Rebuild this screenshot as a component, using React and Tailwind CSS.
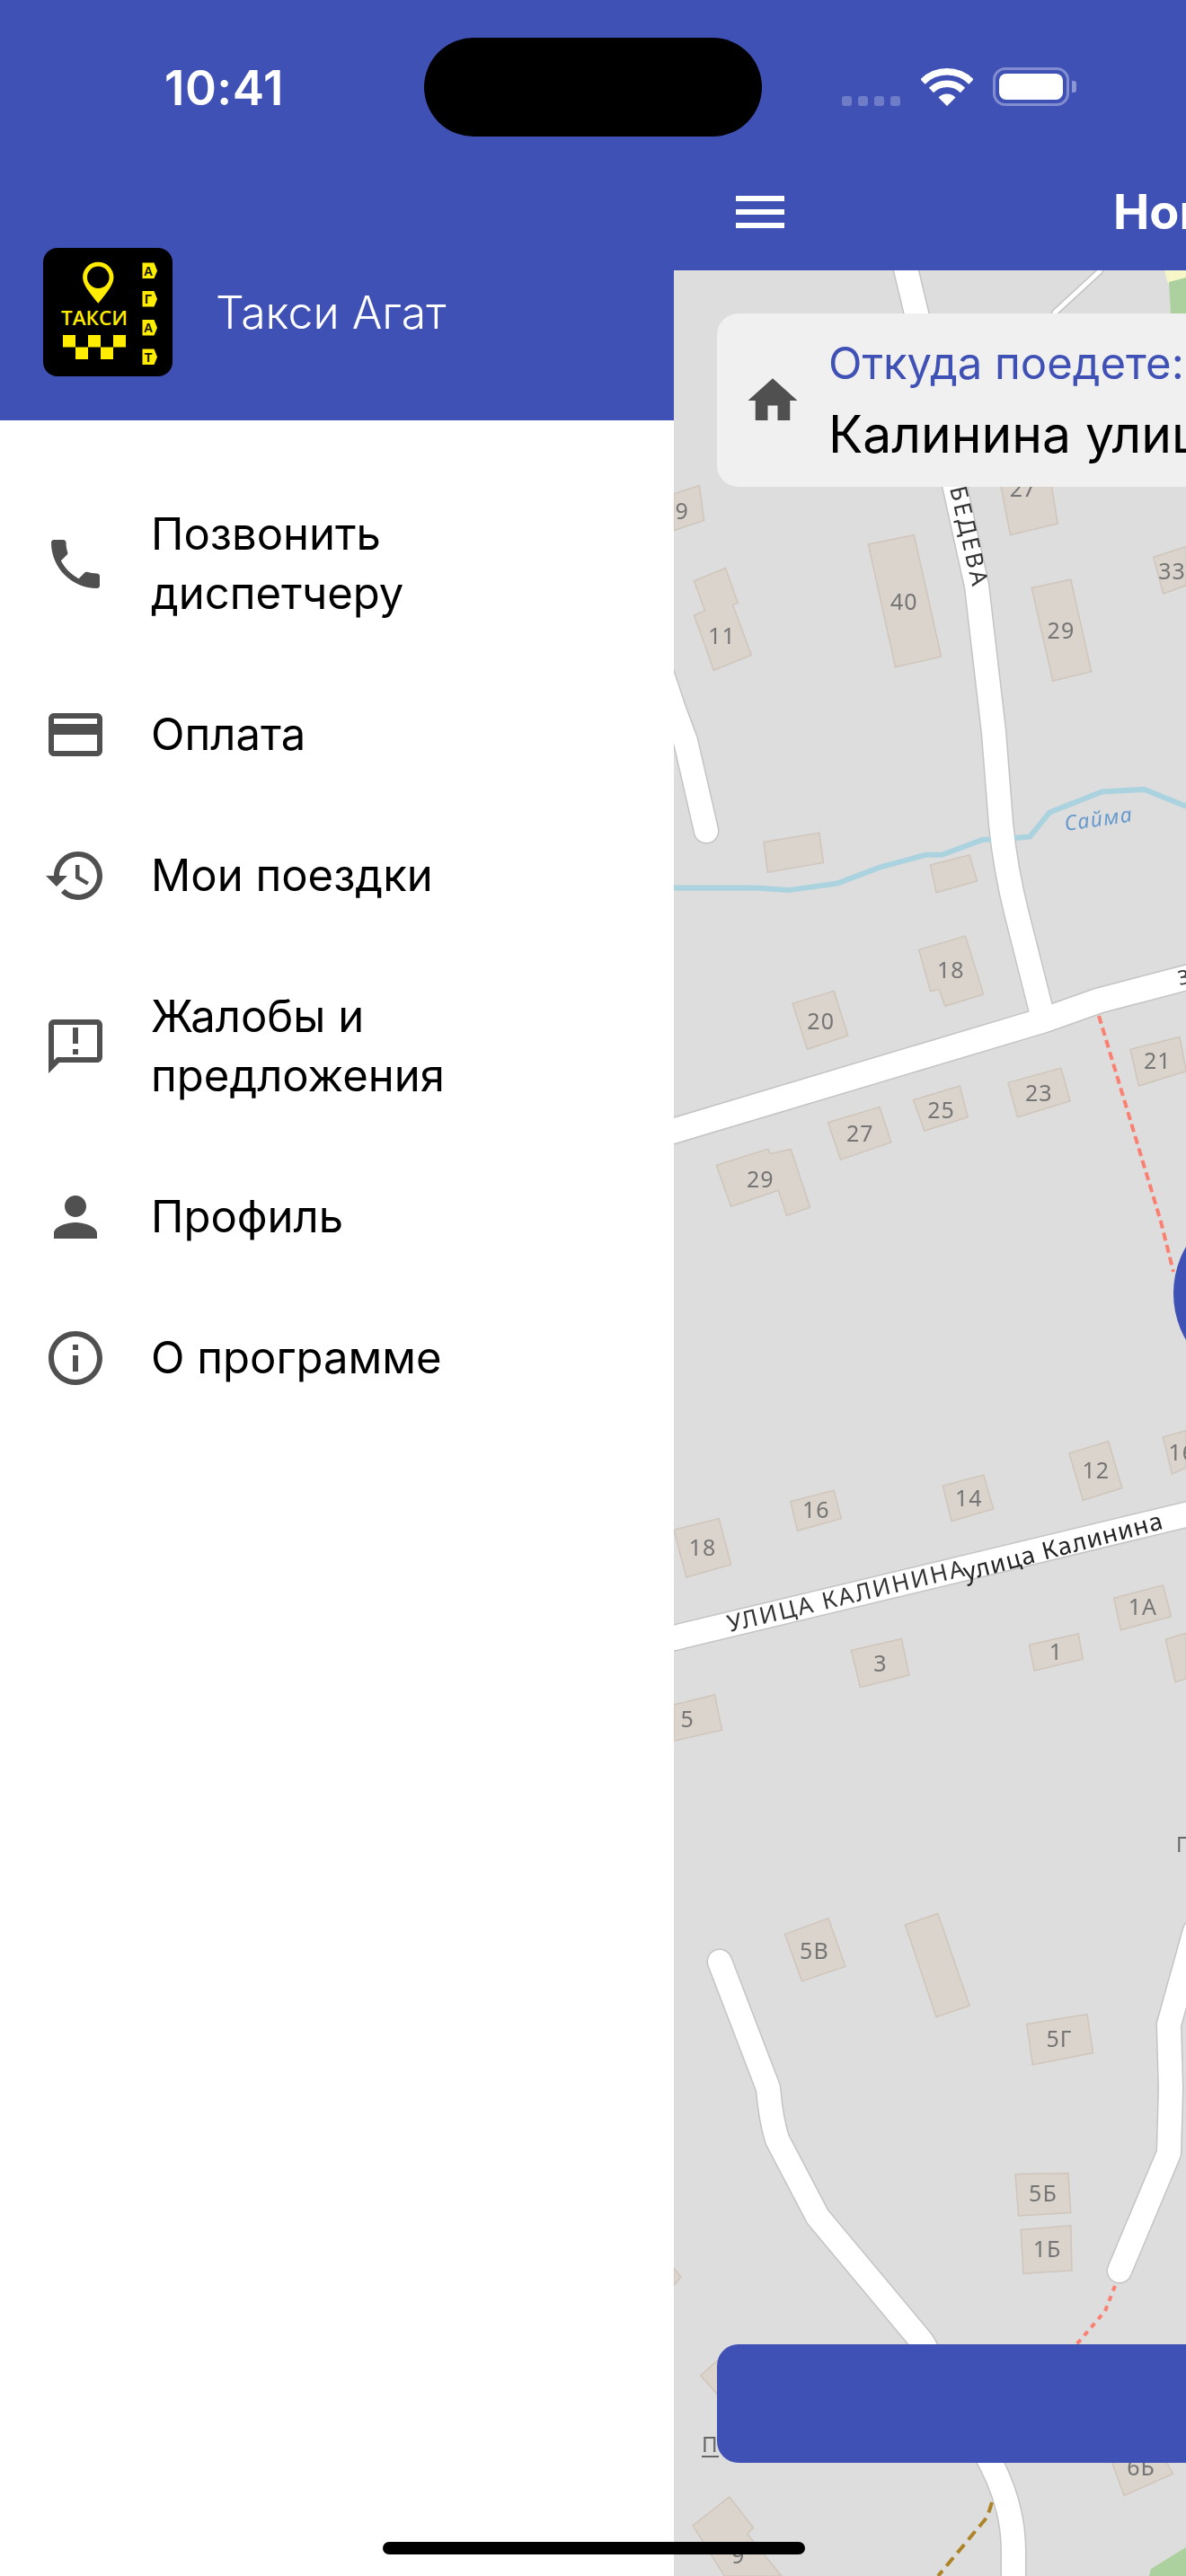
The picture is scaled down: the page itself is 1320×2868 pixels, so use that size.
import React from "react";

const BRAND = "#3f51b5";

// map pieces were read off three crops of the screen, each with its own scale
const crops = {
  a: (x, y) => [750 + x / 2.75, 560 + y / 1.96],
  b: (x, y) => [750 + x / 2.75, 1360 + y / 2.063],
  c: (x, y) => [750 + x / 2.75, 2120 + y / 2.096],
};

const toPoints = (crop, list) => {
  const nums = list.split(/[\s,]+/).map(Number);
  const out = [];
  for (let i = 0; i < nums.length; i += 2) {
    out.push(crops[crop](nums[i], nums[i + 1]).map((n) => n.toFixed(1)).join(","));
  }
  return out.join(" ");
};

const buildings = [
  ["a", "0,-20 78,-38 92,38 0,60", "9", 25, 18],
  ["a", "1000,-40 1155,-40 1175,45 1030,70"],
  ["a", "1468,118 1568,95 1568,180 1498,198", "33", 1525, 148],
  ["a", "595,90 735,70 818,335 678,358", "40", 705, 215],
  ["a", "62,170 158,142 196,218 180,222 237,332 122,365 62,245 95,235", "11", 147, 290],
  ["a", "1095,185 1215,167 1278,368 1160,388", "29", 1185, 278],
  ["a", "275,740 445,720 458,785 287,806"],
  ["a", "785,790 905,768 928,825 803,850"],
  ["a", "750,975 892,945 948,1072 830,1098 812,1062 785,1065", "18", 848, 1020],
  ["a", "363,1092 490,1065 533,1162 408,1192", "20", 450, 1130],
  ["a", "1397,1192 1548,1165 1568,1240 1423,1272", "21", 1480, 1218],
  ["a", "1023,1265 1185,1233 1213,1305 1052,1340", "23", 1117, 1287],
  ["a", "733,1303 875,1272 900,1340 767,1370", "25", 818, 1325],
  ["a", "472,1352 630,1318 665,1395 510,1433", "27", 570, 1375],
  ["a", "130,1445 288,1410 295,1420 358,1410 417,1537 345,1555 320,1500 175,1535", "29", 265, 1475],
  ["b", "0,708 138,682 175,788 38,817", "18", 88, 748],
  ["b", "357,643 490,617 512,682 378,710", "16", 435, 663],
  ["b", "823,607 948,582 978,660 850,688", "14", 903, 635],
  ["b", "1210,532 1330,505 1372,612 1252,640", "12", 1292, 572],
  ["b", "1497,495 1568,480 1568,565 1525,580", "16", 1556, 530],
  ["b", "1347,865 1497,835 1522,907 1368,938", "1А", 1435, 885],
  ["b", "543,985 697,958 720,1042 570,1070", "3", 632, 1015],
  ["b", "1088,972 1238,947 1252,1005 1103,1032", "1", 1170, 988],
  ["b", "1505,960 1568,945 1568,1050 1535,1058"],
  ["b", "0,1110 125,1087 147,1168 0,1193", "5", 42, 1143],
  ["c", "340,70 473,33 525,145 392,180", "5В", 430, 108],
  ["c", "708,48 808,22 905,237 803,263"],
  ["c", "1080,280 1265,257 1283,347 1098,375", "5Г", 1180, 315],
  ["c", "1045,630 1207,628 1215,720 1055,727", "5Б", 1130, 675],
  ["c", "1062,760 1215,750 1218,855 1070,862", "1Б", 1143, 805],
  ["c", "0,850 22,870 0,890"],
  ["c", "82,1100 140,1060 200,1100 140,1150"],
  ["c", "1335,1290 1500,1290 1527,1330 1378,1380", "6Б", 1430, 1315],
  ["c", "58,1450 170,1383 243,1455 225,1470 330,1568 155,1568", "9", 197, 1520],
];

const roads = [
  ["M1007 295 L1020 349 L1087 652 L1106 815 L1114 917 Q1119 968 1132 1019 L1159 1126", 26],
  ["M740 1262 L1161 1136 L1223 1114 L1330 1086", 27],
  ["M735 745 L750 790 L763 825 L786 925", 26],
  ["M740 1826 L1330 1684", 27],
  ["M801 2184 L855 2325 Q858 2360 865 2382 L910 2468 L1026 2607 L1090 2720 Q1128 2780 1128 2840 L1128 2880", 26],
  ["M1246 2528 L1301 2397 L1303 2325 L1301 2254 L1330 2150", 26],
  ["M1224 302 L1174 348", 5],
];

function StreamAndPaths() {
  return (
    <>
      <polyline
        points={toPoints("a", "0,840 250,840 350,845 500,830 630,795 770,768 820,768 945,735 1060,730 1090,728 1150,675 1310,630 1440,625 1568,662")}
        fill="none"
        stroke="#aad3df"
        strokeWidth="6"
      />
      <path d="M1223 1131 L1292 1360 L1306 1416" fill="none" stroke="#fa8072" strokeWidth="4" strokeDasharray="9 5" />
      <path d="M1241 2545 L1230 2573 L1201 2607 L1170 2630" fill="none" stroke="#fa8072" strokeWidth="4" strokeDasharray="6 6" />
      <path d="M1104 2786 L1099 2802 L1044 2868" fill="none" stroke="#ac8327" strokeWidth="4" strokeDasharray="12 7" />
    </>
  );
}

function MapLayer() {
  return (
    <svg viewBox="750 301 570 2567" className="h-full w-full blur-[0.6px] font-['Noto_Sans',sans-serif]">
      <path d="M1296 301 L1320 301 L1320 309 L1300 316 Z" fill="#f6f6c8" />
      <path d="M1301 314 L1320 309 L1320 349 L1303 349 Z" fill="#add19e" />
      <path d="M1279 2868 L1281 2860 L1320 2836 L1320 2868 Z" fill="#add19e" />

      {roads.map(([d, w]) => (
        <path key={d} d={d} fill="none" stroke="#c4c4c4" strokeWidth={w + 3} strokeLinecap="round" strokeLinejoin="round" />
      ))}
      <StreamAndPaths />
      {roads.map(([d, w]) => (
        <path key={d} d={d} fill="none" stroke="#ffffff" strokeWidth={w} strokeLinecap="round" strokeLinejoin="round" />
      ))}

      {buildings.map(([crop, list]) => (
        <polygon key={list} points={toPoints(crop, list)} fill="#dbd4cd" stroke="#cfc5bb" strokeWidth="1.500" />
      ))}
      {buildings
        .filter((b) => b[2])
        .map(([crop, list, label, x, y]) => {
          const [tx, ty] = crops[crop](x, y);
          return (
            <text key={list} x={tx} y={ty + 9} textAnchor="middle" fontSize="25" letterSpacing="1" fill="#757575">
              {label}
            </text>
          );
        })}
      <text x="1138" y="553" textAnchor="middle" fontSize="25" fill="#757575">27</text>

      <text transform="translate(1083 656) rotate(77)" textAnchor="end" fontSize="26" letterSpacing="3" fill="#333">ЛЕБЕДЕВА</text>
      <text transform="translate(812 1817) rotate(-13.4)" fontSize="26" textLength="270" fill="#333">УЛИЦА КАЛИНИНА</text>
      <text transform="translate(1075 1760) rotate(-14.8)" fontSize="27" textLength="228" fill="#222">улица Калинина</text>
      <text transform="translate(1186 925) rotate(-8)" fontSize="23" fontStyle="italic" letterSpacing="1.500" fill="#6699cc">Сайма</text>
      <text transform="translate(1313 1097) rotate(-13)" fontSize="22" fill="#333">З</text>
      <text x="1309" y="2062" fontSize="23" fill="#666">П</text>
      <text x="781" y="2730" fontSize="24" fill="#666">П</text>
      <line x1="781" y1="2735" x2="800" y2="2735" stroke="#666" strokeWidth="2" />
      <circle cx="1410" cy="1440" r="104" fill={BRAND} />
    </svg>
  );
}

function TaxiLogo() {
  const tags = [
    [16.5, "А"],
    [48, "Г"],
    [80, "А"],
    [112.5, "Т"],
  ];
  return (
    <svg viewBox="0 0 144 143" className="h-[143px] w-[144px] shrink-0 rounded-[16px] bg-black">
      <path
        fillRule="evenodd"
        fill="#ffec00"
        d="M61.3 15.7c-9.500 0-17.200 7.500-17.200 17 0 9 9.700 19.500 17.200 29 7.500-9.500 17.200-20 17.200-29 0-9.500-7.700-17-17.200-17zm0 4.800c6.800 0 12.300 5.500 12.300 12.300S68.100 45 61.300 45 49 39.500 49 32.800s5.500-12.300 12.300-12.300z"
      />
      <text x="20" y="85.500" fontSize="22" fontWeight="600" textLength="74" lengthAdjust="spacingAndGlyphs" fill="#ffec00" fontFamily="'Open Sans', sans-serif">
        ТАКСИ
      </text>
      {[22, 50, 78].map((x) => (
        <rect key={x} x={x} y="97" width="14" height="13.500" fill="#ffec00" />
      ))}
      {[36, 64].map((x) => (
        <rect key={x} x={x} y="110.500" width="14" height="13.500" fill="#ffec00" />
      ))}
      {tags.map(([y, letter]) => (
        <g key={y}>
          <polygon points={`110.500,${y} 123.500,${y} 127,${y + 9} 123.500,${y + 17.500} 110.500,${y + 17.500}`} fill="#ffec00" />
          <text x="117" y={y + 14} fontSize="14" fontWeight="700" textAnchor="middle" fill="#111" fontFamily="'Liberation Sans', sans-serif">
            {letter}
          </text>
        </g>
      ))}
    </svg>
  );
}

function Icon({ d, className = "h-[72px] w-[72px] -my-[4px]" }) {
  return (
    <svg viewBox="0 0 24 24" className={`${className} shrink-0`} fill="#505050">
      <path d={d} />
    </svg>
  );
}

const menuItems = [
  {
    label: ["Позвонить", "диспетчеру"],
    icon: "M6.62 10.79c1.44 2.83 3.76 5.14 6.59 6.59l2.2-2.2c.27-.27.67-.36 1.02-.24 1.12.37 2.33.57 3.57.57.55 0 1 .45 1 1V20c0 .55-.45 1-1 1-9.39 0-17-7.61-17-17 0-.55.45-1 1-1h3.5c.55 0 1 .45 1 1 0 1.25.2 2.45.57 3.57.11.35.03.74-.25 1.02l-2.2 2.2z",
  },
  {
    label: ["Оплата"],
    icon: "M20 4H4c-1.11 0-1.99.89-1.99 2L2 18c0 1.11.89 2 2 2h16c1.11 0 2-.89 2-2V6c0-1.11-.89-2-2-2zm0 14H4v-6h16v6zm0-10H4V6h16v2z",
  },
  {
    label: ["Мои поездки"],
    icon: "M13 3c-4.97 0-9 4.03-9 9H1l3.89 3.89.07.14L9 12H6c0-3.87 3.13-7 7-7s7 3.13 7 7-3.13 7-7 7c-1.93 0-3.68-.79-4.94-2.06l-1.42 1.42C8.27 19.99 10.51 21 13 21c4.97 0 9-4.03 9-9s-4.03-9-9-9zm-1 5v5l4.28 2.54.72-1.21-3.5-2.08V8H12z",
  },
  {
    label: ["Жалобы и", "предложения"],
    icon: "M20 2H4c-1.1 0-1.99.9-1.99 2L2 22l4-4h14c1.1 0 2-.9 2-2V4c0-1.1-.9-2-2-2zm0 14H5.17L4 17.17V4h16v12zM11 5h2v6h-2zm0 8h2v2h-2z",
  },
  {
    label: ["Профиль"],
    icon: "M12 12c2.21 0 4-1.79 4-4s-1.79-4-4-4-4 1.79-4 4 1.79 4 4 4zm0 2c-2.67 0-8 1.34-8 4v2h16v-2c0-2.66-5.33-4-8-4z",
  },
  {
    label: ["О программе"],
    icon: "M11 7h2v2h-2zm0 4h2v6h-2zm1-9C6.48 2 2 6.48 2 12s4.48 10 10 10 10-4.48 10-10S17.52 2 12 2zm0 18c-4.41 0-8-3.59-8-8s3.59-8 8-8 8 3.59 8 8-3.59 8-8 8z",
  },
];

function Drawer() {
  return (
    <aside className="flex w-[750px] shrink-0 flex-col bg-white">
      <div className="flex h-[468px] flex-col bg-[#3f51b5] text-white">
        <div className="pl-[183px] pt-[66px] text-[53px] font-semibold leading-[64px] tracking-[0.5px]">10:41</div>
        <div className="mt-[146px] flex items-center gap-[48px] pl-[48px]">
          <TaxiLogo />
          <span className="text-[50px] leading-[58px] font-light">Такси Агат</span>
        </div>
      </div>
      <nav className="flex flex-col pt-[48px]">
        {menuItems.map((item) => (
          <div key={item.label[0]} className="flex items-center gap-[48px] py-[45.5px] pl-[48px]">
            <Icon d={item.icon} />
            <div className="text-[49px] leading-[66px] text-black">
              {item.label.map((line) => (
                <div key={line}>{line}</div>
              ))}
            </div>
          </div>
        ))}
      </nav>
    </aside>
  );
}

function StatusIcons() {
  return (
    <div className="flex items-end pl-[187px] pt-[75px]">
      <div className="flex gap-[7px]">
        {[0, 1, 2, 3].map((i) => (
          <span key={i} className="h-[11px] w-[11px] rounded-[3px] bg-white/25" />
        ))}
      </div>
      <svg viewBox="0 0 58 42" className="ml-[23px] h-[42px] w-[58px]" fill="none" stroke="#fff" strokeWidth="7.500">
        <path d="M2 15A38.200 38.200 0 0 1 56 15" />
        <path d="M11.500 24.500A24.800 24.800 0 0 1 46.500 24.500" />
        <path d="M29 42L19.500 32.500A13.500 13.500 0 0 1 38.500 32.500Z" fill="#fff" stroke="none" />
      </svg>
      <div className="ml-[22px] flex items-center">
        <div className="h-[43px] w-[85px] rounded-[14px] border-[3px] border-white/35 p-[4px]">
          <div className="h-full w-full rounded-[8px] bg-white" />
        </div>
        <span className="ml-[3px] h-[13px] w-[5px] rounded-r-[3px] bg-white/40" />
      </div>
    </div>
  );
}

function MainScreen() {
  return (
    <main className="relative flex min-w-0 flex-1 flex-col overflow-hidden">
      <header className="h-[301px] shrink-0 bg-[#3f51b5] text-white">
        <StatusIcons />
        <div className="mt-[88px] flex items-center pl-[69px]">
          <div className="flex w-[54px] shrink-0 flex-col gap-[9px]">
            <span className="h-[6px] bg-white" />
            <span className="h-[6px] bg-white" />
            <span className="h-[6px] bg-white" />
          </div>
          <span className="ml-[366px] whitespace-nowrap text-[54px] font-bold leading-[60px]">Новый заказ</span>
        </div>
      </header>
      <div className="relative flex-1 bg-[#dddddd]">
        <MapLayer />
        <div className="absolute left-[48px] top-[48px] flex h-[193px] w-[1224px] items-center rounded-[24px] bg-[#f0f0f0] pl-[29px]">
          <Icon d="M10 20v-6h4v6h5v-8h3L12 3 2 12h3v8z" className="h-[66px] w-[66px]" />
          <div className="ml-[29px] whitespace-nowrap pb-[3px]">
            <div className="text-[49px] leading-[79px] text-[#3f51b5]">Откуда поедете:</div>
            <div className="text-[57px] leading-[79px] text-black">Калинина улица, 14</div>
          </div>
        </div>
        <button className="absolute bottom-[126px] left-[48px] h-[132px] w-[1224px] rounded-[24px] bg-[#3f51b5]" />
      </div>
    </main>
  );
}

export default function App() {
  return (
    <div className="relative flex h-[2868px] w-[1320px] overflow-hidden bg-white font-['Inter',sans-serif]">
      <Drawer />
      <MainScreen />
      <div className="absolute left-[472px] top-[42px] h-[110px] w-[376px] rounded-full bg-black" />
      <div className="absolute bottom-[24px] left-[426px] h-[14px] w-[470px] rounded-full bg-black" />
    </div>
  );
}
